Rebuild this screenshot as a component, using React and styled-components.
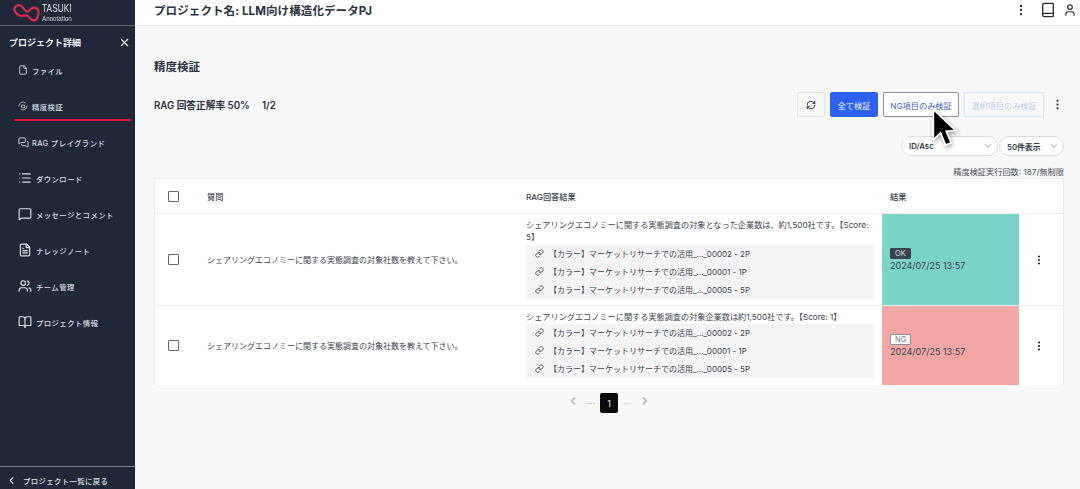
import React from "react";
import styled, { createGlobalStyle } from "styled-components";
import {
  X,
  File,
  List,
  MessageSquare,
  FileText,
  Users,
  BookOpen,
  ChevronLeft,
  ChevronRight,
  ChevronDown,
  RefreshCw,
  MoreVertical,
  Book,
  User,
  Link,
  MessagesSquare,
} from "lucide-react";

const FONT = `Inter, "Noto Sans CJK JP", sans-serif`;

const GlobalStyle = createGlobalStyle`
  html, body {
    margin: 0;
    padding: 0;
    height: 100%;
    overflow: hidden;
    background: #f8f8f8;
    font-family: ${FONT};
  }
  * { box-sizing: border-box; }
`;

const Page = styled.div`
  display: flex;
  width: 1080px;
  height: 489px;
  overflow: hidden;
  position: relative;
`;

// Sidebar
const Sidebar = styled.aside`
  width: 135px;
  flex: none;
  display: flex;
  flex-direction: column;
  background: #1f2738;
  color: #e6e8ec;
`;

const Brand = styled.div`
  height: 26px;
  flex: none;
  display: flex;
  align-items: center;
  padding-left: 13px;
  border-bottom: 1px solid #5d6676;
`;

const BrandText = styled.div`
  display: flex;
  flex-direction: column;
  margin-left: 2px;
  color: #dfe2e7;
  font-family: "Liberation Sans", sans-serif;
  transform: scaleX(0.78);
  transform-origin: left center;
`;

const BrandName = styled.span`
  font-size: 10.5px;
  line-height: 11px;
  letter-spacing: 0.2px;
`;

const BrandSub = styled.span`
  font-size: 8px;
  line-height: 9px;
  color: #d0d3d9;
`;

const SideHead = styled.div`
  height: 26px;
  flex: none;
  display: flex;
  align-items: center;
  justify-content: space-between;
  padding: 7px 4px 0 9px;
  font-size: 9px;
  font-weight: 700;
  color: #f1f2f4;
`;

const Nav = styled.nav`
  flex: 1;
  display: flex;
  flex-direction: column;
`;

const NavItem = styled.a`
  position: relative;
  height: 36px;
  flex: none;
  display: flex;
  align-items: center;
  gap: ${(p) => p.$gap}px;
  padding-left: 18px;
  font-size: 7.4px;
  font-weight: 500;
  letter-spacing: 0.4px;
  color: #dcdfe4;
  white-space: nowrap;

  ${(p) =>
    p.$active &&
    `
    &::after {
      content: "";
      position: absolute;
      left: 14px;
      right: 4px;
      bottom: 3px;
      height: 2px;
      border-radius: 1px;
      background: #e3173e;
    }
  `}
`;

const SideFoot = styled.div`
  height: 23px;
  flex: none;
  display: flex;
  align-items: center;
  gap: 6px;
  padding: 4px 0 0 6px;
  border-top: 1px solid #7c8491;
  font-size: 7.4px;
  font-weight: 500;
  letter-spacing: 0.35px;
  color: #e0e2e7;
`;

// Main
const Main = styled.main`
  flex: 1;
  min-width: 0;
  display: flex;
  flex-direction: column;
`;

const TopBar = styled.header`
  height: 26px;
  flex: none;
  display: flex;
  align-items: center;
  padding: 0 3px 5px 19px;
  background: #fff;
  border-bottom: 1px solid #e6e6e6;
  color: #2b3240;
`;

const ProjectTitle = styled.h1`
  flex: 1;
  margin: 0;
  font-size: 11.5px;
  font-weight: 700;
  letter-spacing: 0.1px;
`;

const TopIcons = styled.div`
  display: flex;
  align-items: center;
  gap: 7px;
  color: #262c38;
`;

const BookIcon = styled(Book)`
  margin-left: 5px;
`;

const Content = styled.div`
  flex: 1;
  display: flex;
  flex-direction: column;
  padding: 32px 16px 0 19px;
`;

const Heading = styled.h2`
  margin: 0;
  height: 17px;
  font-size: 11.5px;
  line-height: 19px;
  font-weight: 700;
  color: #2b3240;
`;

const ActionRow = styled.div`
  margin-top: 17px;
  height: 25px;
  display: flex;
  align-items: center;
  justify-content: space-between;
`;

const Score = styled.div`
  font-size: 9.7px;
  font-weight: 600;
  color: #2b3240;
  white-space: pre;
`;

const Actions = styled.div`
  display: flex;
  align-items: center;
  gap: 5px;
`;

const Btn = styled.button`
  height: 25px;
  padding: 0;
  width: ${(p) => p.$w}px;
  border-radius: 2px;
  font-family: ${FONT};
  font-size: 8.2px;
  display: flex;
  align-items: center;
  justify-content: center;
  border: 1px solid ${(p) => p.$border};
  background: ${(p) => p.$bg};
  color: ${(p) => p.$color};
`;

const MoreWrap = styled.div`
  width: 15px;
  display: flex;
  justify-content: flex-end;
  color: #262c38;
`;

const FilterRow = styled.div`
  margin-top: 19px;
  display: flex;
  justify-content: flex-end;
  gap: 1px;
`;

const Select = styled.div`
  width: ${(p) => p.$w}px;
  height: 20px;
  display: flex;
  align-items: center;
  justify-content: space-between;
  padding: 0 4px 0 7px;
  background: #fff;
  border: 1px solid #dedede;
  border-radius: 10px;
  font-size: 7.8px;
  font-weight: 600;
  color: #333a46;
`;

const RunCount = styled.div`
  margin-top: 10px;
  height: 12px;
  text-align: right;
  font-size: 8.2px;
  line-height: 12px;
  color: #4a4f59;
`;

const Table = styled.div`
  width: 910px;
  background: #fff;
  border: 1px solid #ececec;
  border-bottom: none;
`;

const Row = styled.div`
  display: grid;
  grid-template-columns: 52px 319px 356px 137px 45px;
  min-height: ${(p) => p.$h}px;
  border-bottom: 1px solid #ededed;
  align-items: center;
  &:last-child { border-bottom: none; }
`;

const HeadCell = styled.div`
  padding-left: ${(p) => p.$pad || 0}px;
  font-size: 8.2px;
  font-weight: 500;
  color: #3a404c;
`;

const CheckCell = styled.div`
  display: flex;
  justify-content: center;
  padding-right: 16px;
`;

const Check = styled.span`
  width: 11px;
  height: 11px;
  border: 1.5px solid #666;
  border-radius: 1px;
  background: #fff;
`;

const Question = styled.div`
  font-size: 8px;
  color: #3f4550;
`;

const AnswerCell = styled.div`
  padding: 0 8px 2px 0;
`;

const AnswerText = styled.div`
  font-size: 8.17px;
  line-height: 12.5px;
  color: #3f4550;
`;

const Sources = styled.div`
  margin-top: ${(p) => p.$top}px;
  background: #f4f4f4;
`;

const Source = styled.div`
  height: 18px;
  display: flex;
  align-items: center;
  gap: 5px;
  padding-left: 9px;
  font-size: 8px;
  color: #3f4550;
  white-space: nowrap;
`;

const ResultCell = styled.div`
  align-self: stretch;
  display: flex;
  flex-direction: column;
  justify-content: center;
  align-items: flex-start;
  padding: 0 0 0 8px;
  background: ${(p) => (p.$ok ? "#7cd3c8" : "#f3a7a5")};
  color: #37404c;
  font-size: 9px;
  line-height: 13px;
`;

const Badge = styled.span`
  height: 11px;
  padding: 0 4px;
  font-size: 7.5px;
  line-height: 10px;
  border-radius: 1px;
  border: 1px solid ${(p) => (p.$ok ? "#3a4350" : "#8a8f99")};
  background: ${(p) => (p.$ok ? "#3a4350" : "#fff")};
  color: ${(p) => (p.$ok ? "#d7dbe0" : "#71767f")};
`;

const MenuCell = styled.div`
  display: flex;
  justify-content: center;
  padding-right: 6px;
  color: #262c38;
`;

const Pager = styled.div`
  margin-top: 8px;
  display: flex;
  justify-content: center;
  align-items: center;
  gap: 5px;
  color: #a9a9a9;
  font-size: 9px;
`;

const PageNum = styled.span`
  width: 18px;
  height: 20px;
  display: flex;
  align-items: center;
  justify-content: center;
  background: #0a0a0a;
  color: #eee;
  border-radius: 2px;
  font-size: 9px;
`;

const PagerArrow = styled.span`
  display: flex;
  margin: 0 3px;
  position: relative;
  top: -2px;
`;

// the recorded mouse pointer sits over the buttons
const Pointer = styled.svg`
  position: absolute;
  left: 930px;
  top: 107px;
  filter: drop-shadow(1px 2px 2px rgba(0, 0, 0, 0.35));
`;

const Logo = () => (
  <svg width="27" height="19" viewBox="0 0 27 19" fill="none">
    <path
      d="M1.500 6C2 3 4.500 1.500 7 2.300C10 3.300 11 7.500 13.500 8.500C15.500 9.300 16.500 7 18 5.800C19.800 4.500 22.500 4.300 24 5.500C26 7 25.800 10 25 13C24.300 15.500 22.500 17.800 20 17.300C17.500 16.800 16.500 13.500 14 12.500C12 11.800 10.500 13.300 8.500 13C5.500 12.500 1 9.500 1.500 6Z"
      stroke="#dc2a48"
      strokeWidth="2.2"
    />
  </svg>
);

// 精度検証 nav icon: two arrows round a small square
const VerifyIcon = () => (
  <svg width="10" height="10" viewBox="0 0 11 11" fill="none" stroke="#c6cad1" strokeWidth="0.8">
    <path d="M1 6A4.500 4.500 0 0 1 8.500 2.300" />
    <path d="M10 5A4.500 4.500 0 0 1 3 9" />
    <rect x="4" y="4.500" width="3.500" height="3" />
  </svg>
);

const navItems = [
  { label: "ファイル", icon: <File size={10} />, gap: 4 },
  { label: "精度検証", icon: <VerifyIcon />, gap: 4, active: true },
  { label: "RAG プレイグランド", icon: <MessagesSquare size={11} />, gap: 3 },
  { label: "ダウンロード", icon: <List size={14} />, gap: 4 },
  { label: "メッセージとコメント", icon: <MessageSquare size={14} />, gap: 4 },
  { label: "ナレッジノート", icon: <FileText size={14} />, gap: 4 },
  { label: "チーム管理", icon: <Users size={14} />, gap: 4 },
  { label: "プロジェクト情報", icon: <BookOpen size={14} />, gap: 4 },
];

const question = "シェアリングエコノミーに関する実態調査の対象社数を教えて下さい。";

const sources = [
  "【カラー】マーケットリサーチでの活用_..._00002 - 2P",
  "【カラー】マーケットリサーチでの活用_..._00001 - 1P",
  "【カラー】マーケットリサーチでの活用_..._00005 - 5P",
];

const rows = [
  {
    h: 92,
    ok: true,
    sourceTop: 1,
    answer:
      "シェアリングエコノミーに関する実態調査の対象となった企業数は、約1,500社です。【Score: 5】",
  },
  {
    h: 79,
    ok: false,
    sourceTop: 0,
    answer: "シェアリングエコノミーに関する実態調査の対象企業数は約1,500社です。【Score: 1】",
  },
];

const App = () => (
  <Page>
    <GlobalStyle />
    <Sidebar>
      <Brand>
        <Logo />
        <BrandText>
          <BrandName>TASUKI</BrandName>
          <BrandSub>Annotation</BrandSub>
        </BrandText>
      </Brand>
      <SideHead>
        プロジェクト詳細
        <X size={13} />
      </SideHead>
      <Nav>
        {navItems.map((item) => (
          <NavItem key={item.label} $gap={item.gap} $active={item.active}>
            {item.icon}
            {item.label}
          </NavItem>
        ))}
      </Nav>
      <SideFoot>
        <ChevronLeft size={11} strokeWidth={2.4} />
        プロジェクト一覧に戻る
      </SideFoot>
    </Sidebar>

    <Main>
      <TopBar>
        <ProjectTitle>プロジェクト名: LLM向け構造化データPJ</ProjectTitle>
        <TopIcons>
          <MoreVertical size={14} />
          <BookIcon size={16} />
          <User size={14} />
        </TopIcons>
      </TopBar>

      <Content>
        <Heading>精度検証</Heading>
        <ActionRow>
          <Score>RAG 回答正解率 50%     1/2</Score>
          <Actions>
            <Btn $w={28} $bg="#f8f8f8" $border="#e2e2e2" $color="#2a2f3a">
              <RefreshCw size={10} strokeWidth={2.4} />
            </Btn>
            <Btn $w={48} $bg="#2e62ee" $border="#2e62ee" $color="#f0f3fd">
              全て検証
            </Btn>
            <Btn $w={76} $bg="#fff" $border="#8c9099" $color="#3f66c8">
              NG項目のみ検証
            </Btn>
            <Btn $w={80} $bg="#f8f8f8" $border="#d7e0f6" $color="#c5d0ea">
              選択項目のみ検証
            </Btn>
            <MoreWrap>
              <MoreVertical size={13} />
            </MoreWrap>
          </Actions>
        </ActionRow>

        <FilterRow>
          <Select $w={97}>
            ID/Asc
            <ChevronDown size={10} color="#8a8a8a" />
          </Select>
          <Select $w={65}>
            50件表示
            <ChevronDown size={10} color="#8a8a8a" />
          </Select>
        </FilterRow>

        <RunCount>精度検証実行回数: 187/無制限</RunCount>

        <Table>
          <Row $h={35}>
            <CheckCell>
              <Check />
            </CheckCell>
            <HeadCell>質問</HeadCell>
            <HeadCell>RAG回答結果</HeadCell>
            <HeadCell $pad={8}>結果</HeadCell>
            <div />
          </Row>
          {rows.map((row) => (
            <Row key={row.h} $h={row.h}>
              <CheckCell>
                <Check />
              </CheckCell>
              <Question>{question}</Question>
              <AnswerCell>
                <AnswerText>{row.answer}</AnswerText>
                <Sources $top={row.sourceTop}>
                  {sources.map((s) => (
                    <Source key={s}>
                      <Link size={9} strokeWidth={2.2} />
                      {s}
                    </Source>
                  ))}
                </Sources>
              </AnswerCell>
              <ResultCell $ok={row.ok}>
                <Badge $ok={row.ok}>{row.ok ? "OK" : "NG"}</Badge>
                2024/07/25 13:57
              </ResultCell>
              <MenuCell>
                <MoreVertical size={12} strokeWidth={2.4} />
              </MenuCell>
            </Row>
          ))}
        </Table>

        <Pager>
          <PagerArrow>
            <ChevronLeft size={12} strokeWidth={2.4} />
          </PagerArrow>
          <span>···</span>
          <PageNum>1</PageNum>
          <span>···</span>
          <PagerArrow>
            <ChevronRight size={12} strokeWidth={2.4} />
          </PagerArrow>
        </Pager>
      </Content>
    </Main>

    <Pointer width="29" height="45" viewBox="0 0 26 40">
      <path
        d="M3 2L3 29L9.500 23L14 34L19 32L14.500 21.500L23 21Z"
        fill="#000"
        stroke="#fff"
        strokeWidth="1.5"
      />
    </Pointer>
  </Page>
);

export default App;
